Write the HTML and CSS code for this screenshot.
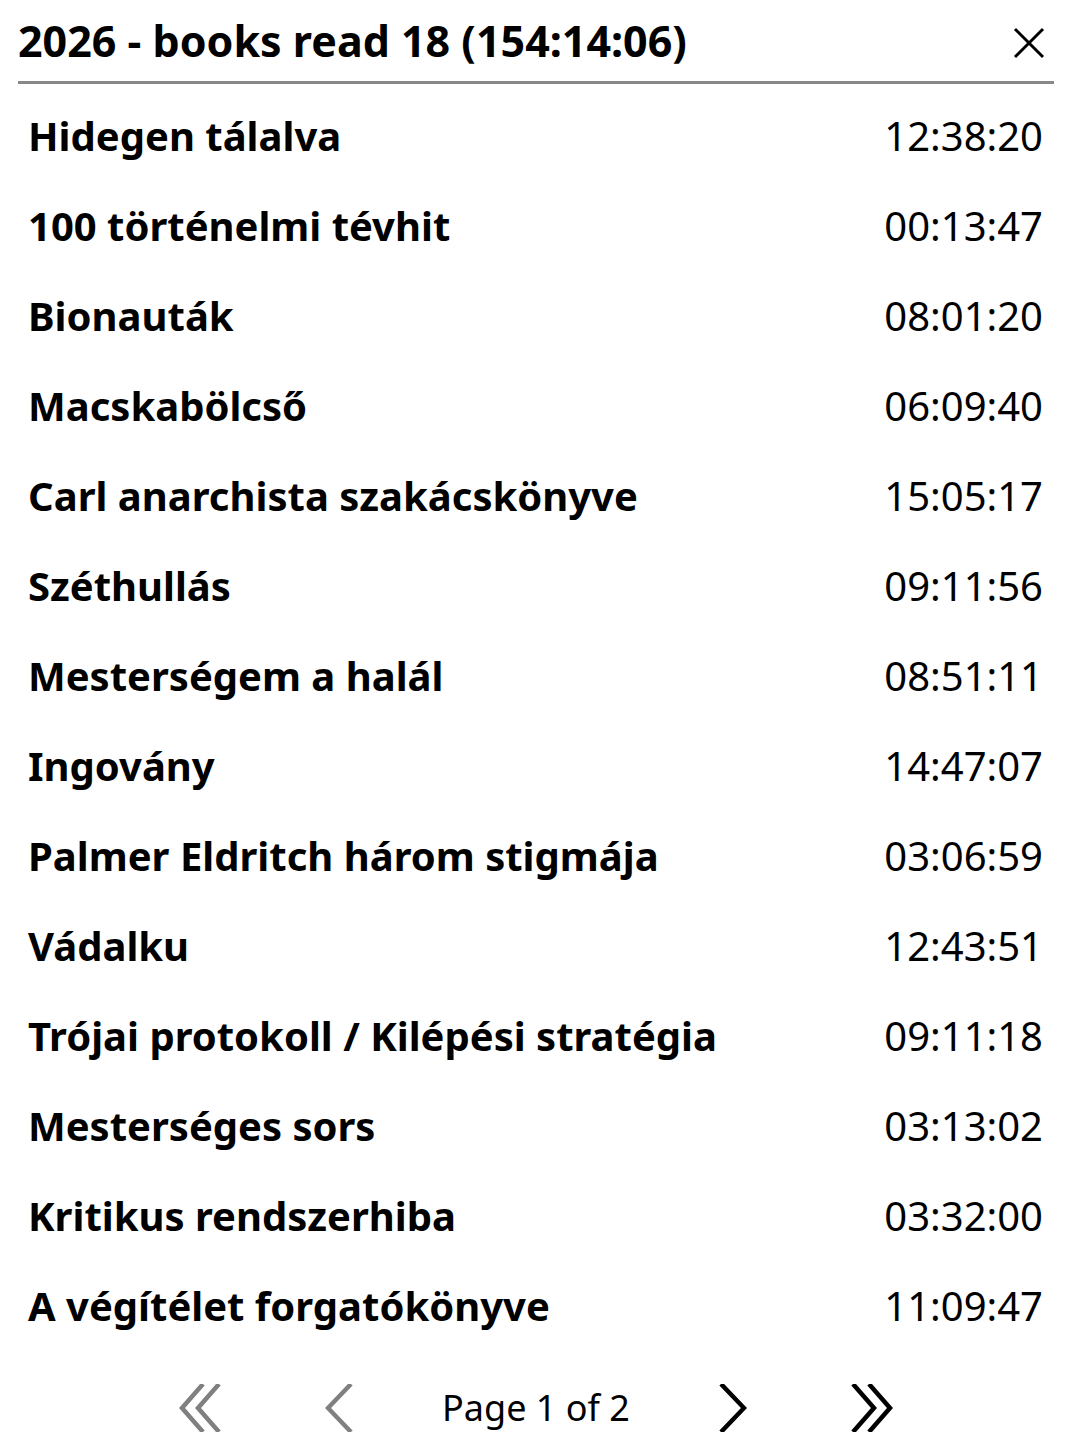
FILE: index.html
```html
<!DOCTYPE html>
<html lang="hu">
<head>
<meta charset="utf-8">
<title>2026 - books read 18</title>
<link rel="stylesheet" href="styles.css">
</head>
<body>
<div class="screen">
  <header class="titlebar">
    <h1 class="title">2026 - books read 18 (154:14:06)</h1>
    <button class="close" aria-label="Close">
      <svg width="32" height="32" viewBox="0 0 32 32"><path d="M2 2 L30 30 M30 2 L2 30" stroke="#000" stroke-width="3" fill="none"/></svg>
    </button>
  </header>
  <ul class="list">
    <li class="row"><span class="name">Hidegen tálalva</span><span class="time">12:38:20</span></li>
    <li class="row"><span class="name">100 történelmi tévhit</span><span class="time">00:13:47</span></li>
    <li class="row"><span class="name">Bionauták</span><span class="time">08:01:20</span></li>
    <li class="row"><span class="name">Macskabölcső</span><span class="time">06:09:40</span></li>
    <li class="row"><span class="name">Carl anarchista szakácskönyve</span><span class="time">15:05:17</span></li>
    <li class="row"><span class="name">Széthullás</span><span class="time">09:11:56</span></li>
    <li class="row"><span class="name">Mesterségem a halál</span><span class="time">08:51:11</span></li>
    <li class="row"><span class="name">Ingovány</span><span class="time">14:47:07</span></li>
    <li class="row"><span class="name">Palmer Eldritch három stigmája</span><span class="time">03:06:59</span></li>
    <li class="row"><span class="name">Vádalku</span><span class="time">12:43:51</span></li>
    <li class="row"><span class="name">Trójai protokoll / Kilépési stratégia</span><span class="time">09:11:18</span></li>
    <li class="row"><span class="name">Mesterséges sors</span><span class="time">03:13:02</span></li>
    <li class="row"><span class="name">Kritikus rendszerhiba</span><span class="time">03:32:00</span></li>
    <li class="row"><span class="name">A végítélet forgatókönyve</span><span class="time">11:09:47</span></li>
  </ul>
  <footer class="pager">
    <span class="pbtn first">
      <svg width="44" height="48" viewBox="0 0 44 48"><path d="M24 0 L3 24 L24 48 M40 0 L19 24 L40 48" stroke="#808080" stroke-width="4.5" fill="none"/></svg>
    </span>
    <span class="pbtn prev">
      <svg width="28" height="48" viewBox="0 0 28 48"><path d="M26 0 L3 24 L26 48" stroke="#808080" stroke-width="4.5" fill="none"/></svg>
    </span>
    <span class="pagetext">Page 1 of 2</span>
    <span class="pbtn next">
      <svg width="28" height="48" viewBox="0 0 28 48"><path d="M2 0 L25 24 L2 48" stroke="#000" stroke-width="4.5" fill="none"/></svg>
    </span>
    <span class="pbtn last">
      <svg width="44" height="48" viewBox="0 0 44 48"><path d="M4 0 L25 24 L4 48 M20 0 L41 24 L20 48" stroke="#000" stroke-width="4.5" fill="none"/></svg>
    </span>
  </footer>
</div>
</body>
</html>
```
FILE: styles.css
```css
html, body {
  margin: 0;
  padding: 0;
  background: #fff;
}
body {
  font-family: "Noto Sans", "DejaVu Sans", sans-serif;
  color: #000;
}
.screen {
  width: 1072px;
  height: 1448px;
  overflow: hidden;
}
.titlebar {
  margin: 0 18px;
  height: 81px;
  border-bottom: 3px solid #888;
  display: flex;
  align-items: center;
  justify-content: space-between;
}
.title {
  margin: 0;
  font-size: 43px;
  font-weight: 700;
  line-height: 1;
}
.close {
  border: 0;
  background: none;
  padding: 0;
  margin-right: 9px;
  margin-top: 4px;
  width: 32px;
  height: 32px;
  display: flex;
}
.list {
  list-style: none;
  margin: 0;
  padding: 7px 28px 0 28px;
}
.row {
  height: 90px;
  display: flex;
  align-items: center;
  justify-content: space-between;
  font-size: 40px;
  line-height: 1;
}
.name {
  font-weight: 700;
}
.time {
  font-weight: 400;
  font-size: 40px;
  margin-right: 1px;
}
.pager {
  height: 114px;
  display: flex;
  align-items: center;
  justify-content: center;
}
.pbtn {
  display: flex;
}
.first { margin-right: 102px; }
.prev { margin-right: 89px; }
.next { margin-left: 89px; }
.last { margin-left: 102px; }
.pagetext {
  font-size: 36px;
  line-height: 1;
}
```
